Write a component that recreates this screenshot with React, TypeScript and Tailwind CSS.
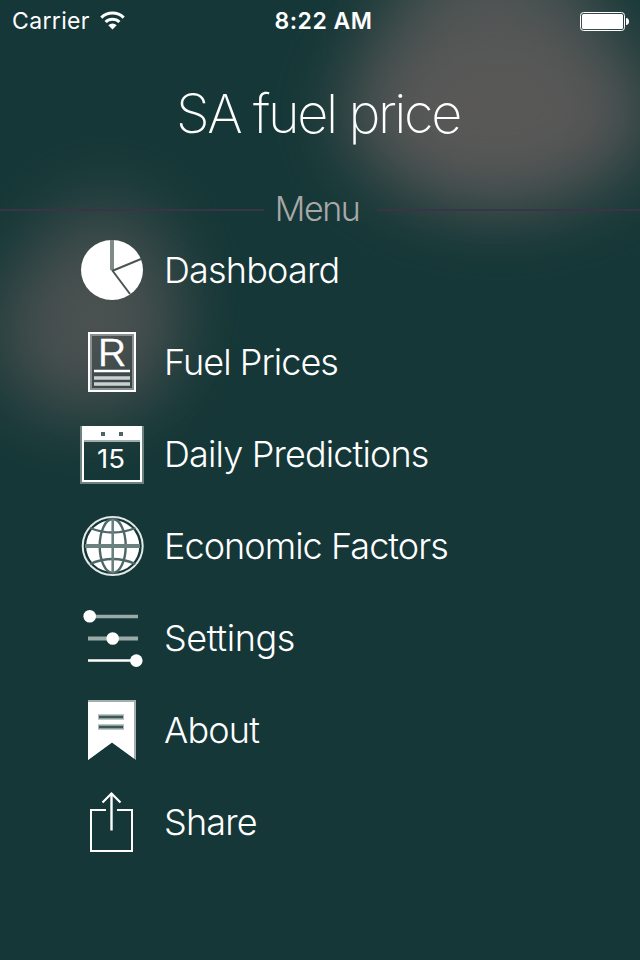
import type { ReactNode } from 'react';

const FONT = 'font-[Inter,"Liberation_Sans",sans-serif]';

function PieIcon() {
  return (
    <>
      <ellipse cx="32" cy="32" rx="31" ry="30" fill="#fff" />
      <path d="M32 2v30" stroke="#7f8b89" strokeWidth="4" />
      <path d="M32 33l29-12M32 32l18 24" stroke="#4b5554" strokeWidth="2" />
    </>
  );
}

function PriceListIcon() {
  return (
    <>
      <path d="M11 5h42v54H11z" fill="none" stroke="#8a9090" strokeWidth="2" />
      <path d="M9 3h46v58H9z" fill="none" stroke="#fff" strokeWidth="2" />
      <text x="17" y="36" fontSize="37" fontWeight="300" textLength="29" lengthAdjust="spacingAndGlyphs" fill="#fff" stroke="#fff" strokeWidth="0.4">R</text>
      <path d="M14 41h36" stroke="#fff" strokeWidth="2.5" />
      <path d="M14 48h36M14 54h36" stroke="#cbd0d0" strokeWidth="3.5" />
    </>
  );
}

function CalendarIcon() {
  return (
    <>
      <path d="M1 4v57h62V4" fill="none" stroke="#6b8281" strokeWidth="2" />
      <path d="M3 5h58v54H3z" fill="none" stroke="#fff" strokeWidth="2" />
      <path d="M2 4h60v14H2z" fill="#fff" />
      <path d="M4 19h56" stroke="#a0afae" strokeWidth="2" />
      <path d="M21 12h4M39 12h4" stroke="#4a6564" strokeWidth="4" />
      <text x="17" y="46" fontSize="26" textLength="28" lengthAdjust="spacingAndGlyphs" fill="#fff">15</text>
    </>
  );
}

function GlobeIcon() {
  return (
    <>
      <ellipse cx="32.7" cy="32" rx="30" ry="29" fill="none" stroke="#e4e9e9" strokeWidth="2" />
      <ellipse cx="32.7" cy="32" rx="26.6" ry="26" fill="#fff" />
      <g fill="none" stroke="#4d6867" strokeWidth="2.4">
        <ellipse cx="32.7" cy="32" rx="13" ry="27" />
        <path d="M10 14q22.7 9 45.4 0M10 50q22.7-10 45.4 0" />
      </g>
      <path d="M32.7 5v54" stroke="#6a8180" strokeWidth="2.6" />
      <path d="M5 32h55" stroke="#6a8180" strokeWidth="4" />
    </>
  );
}

function SlidersIcon() {
  return (
    <>
      <path d="M10 10.5h48" stroke="#9aaaa9" strokeWidth="3.5" />
      <path d="M8 32.5h50" stroke="#9aaaa9" strokeWidth="4" />
      <path d="M8 54.5h48" stroke="#fff" strokeWidth="2.5" />
      <g fill="#fff">
        <circle cx="9.7" cy="10.3" r="6.3" />
        <circle cx="32.7" cy="32.5" r="6.3" />
        <circle cx="56.3" cy="54.6" r="6.3" />
      </g>
    </>
  );
}

function BookmarkIcon() {
  return (
    <>
      <path d="M8 2h48v60L32 44.5 8 62z" fill="#a3b0af" />
      <path d="M8 4h46v56.5L32 44.5 8 62z" fill="#fff" />
      <path d="M18 19h26M18 29h26" stroke="#a9b7b6" strokeWidth="5.5" />
      <path d="M19 19h24M19 29h24" stroke="#3b5756" strokeWidth="2.4" />
    </>
  );
}

function ShareIcon() {
  return (
    <g fill="none" stroke="#fff">
      <path d="M26 20H11v41h41V20H37" strokeWidth="2" />
      <path d="M31.5 3v37.5" strokeWidth="2.4" />
      <path d="M22.5 12.5l9-9 9 9" strokeWidth="2.2" />
    </g>
  );
}

const ITEMS: { label: string; icon: ReactNode; spacing: string }[] = [
  { label: 'Dashboard', icon: <PieIcon />, spacing: 'tracking-[-0.8px]' },
  { label: 'Fuel Prices', icon: <PriceListIcon />, spacing: 'tracking-[-0.95px]' },
  { label: 'Daily Predictions', icon: <CalendarIcon />, spacing: 'tracking-[-0.85px]' },
  { label: 'Economic Factors', icon: <GlobeIcon />, spacing: 'tracking-[-0.95px]' },
  { label: 'Settings', icon: <SlidersIcon />, spacing: 'tracking-[-0.4px]' },
  { label: 'About', icon: <BookmarkIcon />, spacing: 'tracking-[-0.8px]' },
  { label: 'Share', icon: <ShareIcon />, spacing: 'tracking-[-0.85px]' },
];

function StatusBar() {
  return (
    <header className="grid h-10 grid-cols-3 items-center pl-3 pr-[11px]">
      <div className="flex items-center gap-[10px]">
        <span className="pt-px text-[23px] leading-10 tracking-[0.35px]">Carrier</span>
        <svg width="25" height="19" viewBox="0 0 25 19" fill="none" stroke="#fff" strokeWidth="3" aria-hidden="true">
          <path d="M1.3 6.6a16 16 0 0 1 22.4 0M5.6 11a9.8 9.8 0 0 1 13.8 0" />
          <path d="M12.5 18.5L8.3 14.2a6 6 0 0 1 8.4 0z" fill="#fff" stroke="none" />
        </svg>
      </div>
      <span className="whitespace-nowrap pl-1.5 pt-px text-center text-[23px] font-semibold leading-10 tracking-[0.5px]">8:22 AM</span>
      <svg className="justify-self-end" width="49" height="20" viewBox="0 0 49 20" aria-hidden="true">
        <rect x="0.5" y="1.5" width="44" height="18" rx="3" fill="none" stroke="#fff" />
        <rect x="2" y="3" width="41" height="15" rx="1.5" fill="#fff" />
        <path d="M46 7c2 0 3 1.5 3 3.5s-1 3.5-3 3.5z" fill="#fff" />
      </svg>
    </header>
  );
}

export default function App() {
  return (
    <div className={`relative isolate h-[960px] w-[640px] overflow-hidden bg-[#153737] text-white ${FONT}`}>
      <div aria-hidden="true" className="absolute inset-0 -z-10">
        <div className="absolute -top-20 left-[390px] h-[260px] w-[205px] rounded-[50%] bg-[#565958] opacity-85 blur-[40px]" />
        <div className="absolute left-[345px] top-[20px] h-[185px] w-[310px] rounded-[50%] bg-[#5a5958] opacity-95 blur-[40px]" />
        <div className="absolute left-[35px] top-[200px] h-[190px] w-[140px] rounded-[50%] bg-[#505554] opacity-80 blur-[40px]" />
        <div className="absolute left-[-8px] top-[260px] h-[155px] w-[170px] rounded-[50%] bg-[#525554] opacity-75 blur-[40px]" />
      </div>
      <StatusBar />
      <h1 className="h-[148px] pr-1 text-center text-[54px] font-extralight leading-[148px] tracking-[-2.4px]">SA fuel price</h1>
      <div className="flex h-9 items-center pt-1">
        <span className="mt-1 h-0.5 w-[264px] bg-[#3a3546]" />
        <h2 className="mt-0.5 w-[106px] text-center text-[34px] font-light leading-9 tracking-[-1.5px] text-[#a8a8a8]">Menu</h2>
        <span className="ml-[7px] mt-1 h-0.5 flex-1 bg-[#3a3546]" />
      </div>
      <ul>
        {ITEMS.map(({ label, icon, spacing }) => (
          <li key={label} className="flex h-[92px] items-center pl-20">
            <svg width="64" height="64" viewBox="0 0 64 64" aria-hidden="true">
              {icon}
            </svg>
            <span className={`pl-5 text-[36px] font-light leading-[44px] ${spacing}`}>{label}</span>
          </li>
        ))}
      </ul>
    </div>
  );
}
